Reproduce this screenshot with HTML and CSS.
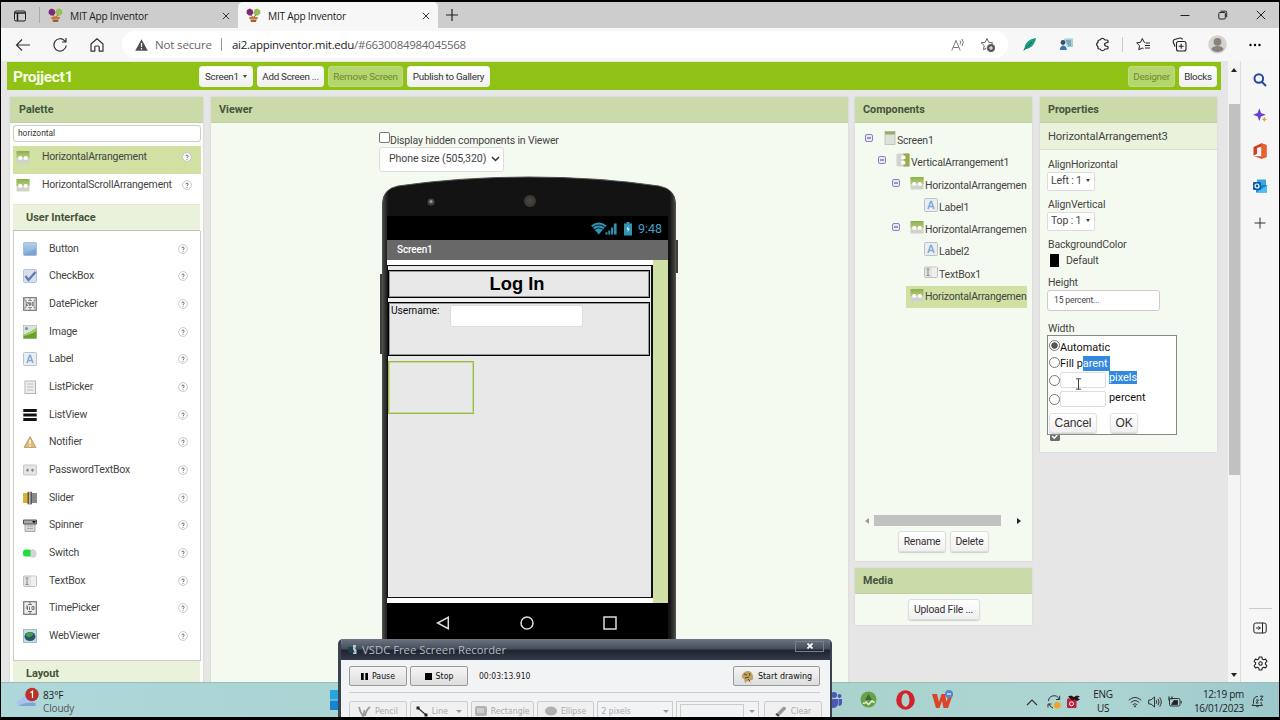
FILE: index.html
```html
<!DOCTYPE html>
<html lang="en">
<head>
    <meta charset="UTF-8">
    <meta name="viewport" content="width=device-width, initial-scale=1.0">
    <title>MIT App Inventor</title>
    <link rel="stylesheet" href="styles.css">
</head>
<body>

<svg class="defs" width="0" height="0">
    <defs>
        <linearGradient id="gBlue" x1="0" y1="0" x2="0" y2="1"><stop offset="0" stop-color="#b4cfec"/><stop offset="1" stop-color="#7da9d6"/></linearGradient>
        <linearGradient id="gGreen" x1="0" y1="0" x2="0" y2="1"><stop offset="0" stop-color="#8cb04c"/><stop offset="1" stop-color="#b3cd78"/></linearGradient>
        <linearGradient id="gPhone" x1="0" y1="0" x2="1" y2="0"><stop offset="0" stop-color="#4a4b49"/><stop offset=".02" stop-color="#131313"/><stop offset=".98" stop-color="#131313"/><stop offset="1" stop-color="#4a4b49"/></linearGradient>
    </defs>
    <symbol id="i-harr" viewBox="0 0 14 14">
        <rect x=".5" y="1" width="13" height="12.500" rx="1" fill="#d0d3ca"/>
        <path d="M.5 1h13v7H.5z" fill="url(#gGreen)"/>
        <rect x="2.300" y="6" width="4" height="3.800" rx="1.500" fill="#fff"/><rect x="7.700" y="6" width="4" height="3.800" rx="1.500" fill="#fff"/>
    </symbol>
    <symbol id="i-varr" viewBox="0 0 14 14">
        <rect x=".5" y=".5" width="13" height="13" rx="1" fill="#cfd3cb"/>
        <path d="M7.500.5h6v13h-6z" fill="#8fb145"/>
        <rect x="5" y="2.500" width="4.500" height="3.800" rx="1.500" fill="#fff"/><rect x="5" y="7.700" width="4.500" height="3.800" rx="1.500" fill="#fff"/>
    </symbol>
    <symbol id="i-screen" viewBox="0 0 14 14">
        <rect x="2" y=".5" width="10" height="13" fill="#dde1da" stroke="#b9bfb3" stroke-width=".8"/>
        <path d="M2 .5h10v3H2z" fill="#97ad6c"/>
    </symbol>
    <symbol id="i-button" viewBox="0 0 14 14">
        <rect x=".5" y=".5" width="13" height="13" rx="1" fill="url(#gBlue)" stroke="#88a9cb" stroke-width=".6"/>
        <path d="M1 13 13 6v7z" fill="#6f9dce" opacity=".5"/>
    </symbol>
    <symbol id="i-checkbox" viewBox="0 0 14 14">
        <rect x=".5" y=".5" width="13" height="13" rx="1" fill="#d8dfec" stroke="#aab6c9" stroke-width=".8"/>
        <path d="m2.500 7 3 4L12.500 3" fill="none" stroke="#5a7bb8" stroke-width="2.300"/>
    </symbol>
    <symbol id="i-date" viewBox="0 0 14 14">
        <rect x=".7" y=".7" width="12.600" height="12.600" fill="#f5f5f5" stroke="#777" stroke-width="1.200"/>
        <path d="M7 1v2M5 3.500h4M7 13v-2M5 10.500h4M1 3h2v8H1M13 3h-2v8h2" stroke="#888" fill="none"/>
        <path d="M3.500 5.500h2v1.500h-2v1.500h2M6.500 5.500v3h1v-3zM9 5.500v3h1v-3z" stroke="#555" stroke-width=".7" fill="none"/>
    </symbol>
    <symbol id="i-image" viewBox="0 0 14 14">
        <rect x=".5" y=".5" width="13" height="13" fill="#d9e3e0" stroke="#a9b5a5" stroke-width=".6"/>
        <path d="M.5 10C5 8 9 6 13.500 3v10.500H.5z" fill="#67a02c"/><path d="M.5 10C5 8 9 6 13.500 3v3C9 9 5 10 .5 11z" fill="#a4cf58"/>
        <circle cx="3.500" cy="3.500" r="1.500" fill="#7d8f94"/>
    </symbol>
    <symbol id="i-label" viewBox="0 0 14 14">
        <rect x=".5" y=".5" width="13" height="13" rx="1" fill="#e9eef3" stroke="#b3bcc7" stroke-width=".9"/>
        <path d="M4 11 6.600 3.500h.8L10 11M5 8.500h4" fill="none" stroke="#86a8d2" stroke-width="1.500"/>
    </symbol>
    <symbol id="i-listpicker" viewBox="0 0 14 14">
        <rect x="2" y="1" width="10.500" height="12.500" fill="#eee" stroke="#b5b5b5"/>
        <path d="M4 4h6.500M4 7h6.500M4 10h6.500" stroke="#bbb" stroke-width="1.200"/>
    </symbol>
    <symbol id="i-listview" viewBox="0 0 14 14"><path d="M.3 2.500h13.400M.3 7h13.400M.3 11.500h13.400" stroke="#111" stroke-width="2.900"/></symbol>
    <symbol id="i-notifier" viewBox="0 0 14 14">
        <path d="M7 1.500 13 12.500H1z" fill="#dfb974" stroke="#b89f76" stroke-width=".9"/><path d="M7 5v4M7 10v1.500" stroke="#fff" stroke-width="1.400"/>
    </symbol>
    <symbol id="i-password" viewBox="0 0 14 14">
        <rect x=".5" y="2" width="13" height="10" rx="1" fill="#e5e5e7" stroke="#bbb" stroke-width=".8"/><path d="M3 7.200h3M8 7.200h3M4.500 5.700v3M9.500 5.700v3" stroke="#85878f" stroke-width="1.200"/>
    </symbol>
    <symbol id="i-slider" viewBox="0 0 14 14">
        <path d="M0 2h5v10H0z" fill="#d9b32d"/><path d="M9 2h5v10H9z" fill="#888c90"/><rect x="4.500" y=".8" width="4.500" height="12.500" fill="#5c564e"/><path d="M6 1h1.500v12H6z" fill="#b8b8b8"/>
    </symbol>
    <symbol id="i-spinner" viewBox="0 0 14 14">
        <path d="M2 5h10v8.500H2z" fill="#d5d8da" stroke="#999" stroke-width=".8"/><path d="M.5 2h13v4H.5z" fill="#a7abb0" stroke="#444" stroke-width=".9"/><path d="M9 3h4l-2 2.500z" fill="#111"/><path d="M4 8h6M4 10.500h6" stroke="#aaa"/>
    </symbol>
    <symbol id="i-switch" viewBox="0 0 14 14"><rect x="5" y="3.500" width="8.500" height="8" rx="4" fill="#ccc"/><rect y="3.500" width="8" height="7" rx="2.500" fill="#24dd3c"/><ellipse cx="10.300" cy="7.500" rx="2.800" ry="4" fill="#d3d3d3"/></symbol>
    <symbol id="i-textbox" viewBox="0 0 14 14">
        <rect x=".5" y="2" width="13" height="10.500" rx="1" fill="#e2e2e2" stroke="#b5b5b5" stroke-width=".8"/><path d="M2.500 4h3M4 4v6.500M2.500 10.500h3" stroke="#8c8c8c" fill="none"/><path d="M8 2.500h5v9.500H8z" fill="#efefef"/>
    </symbol>
    <symbol id="i-time" viewBox="0 0 14 14">
        <rect x=".7" y=".7" width="12.600" height="12.600" fill="#eceff1" stroke="#777" stroke-width="1.200"/>
        <path d="M7 1v3M5 3.500h4M7 13v-3M5 10.500h4M3 5h1.500v4M2.500 7h2M6.500 5.500v3.500M9 5.500v3h2v-3z" stroke="#6c757d" fill="none"/>
    </symbol>
    <symbol id="i-web" viewBox="0 0 14 14">
        <rect x=".5" y=".5" width="13" height="13" fill="#c4dbe9" stroke="#8fb1c6" stroke-width=".8"/><ellipse cx="7" cy="7.500" rx="5.500" ry="4.500" fill="#27566b"/><path d="M3 5c2-2.500 6-2 7-.5S8 8 6 8 2 7 3 5z" fill="#43a047"/>
    </symbol>
    <symbol id="i-help" viewBox="0 0 10 10">
        <circle cx="5" cy="5" r="4.400" fill="#fff" stroke="#bbb" stroke-width=".8"/>
        <path d="M3.800 4.200c0-1.600 2.400-1.600 2.400 0 0 .8-1.200.9-1.200 1.800M5 6.800v.9" fill="none" stroke="#666" stroke-width="1"/>
    </symbol>
    <symbol id="i-minus" viewBox="0 0 8 8"><rect x=".5" y=".5" width="7" height="7" rx="1.500" fill="#eceaf8" stroke="#7877b8" stroke-width=".9"/><path d="M2 4h4" stroke="#454389"/></symbol>
    <symbol id="i-appinv" viewBox="0 0 16 16">
        <path d="M1 2 4 .5 7 2l1 3-2 3H3L.5 5.500z" fill="#7c2a79"/><path d="M9 1.500l3-1 3 2 .5 3-2.500 2.500H9.500L8 5z" fill="#97be55"/>
        <path d="M5 7.500 7.500 10 11 7.500" stroke="#a5632b" fill="none"/><path d="M3.500 9.500h9v2.200h-9z" fill="#c2783c"/><path d="M4.500 12.200h7l-1 2.800h-5z" fill="#a85f2c"/>
    </symbol>
</svg>

<div class="desktop">

    <!-- browser tabs -->
    <div class="tabstrip">
        <svg class="tab-actions" width="14" height="14" viewBox="0 0 14 14" fill="none" stroke="#222"><rect x="1.500" y="2" width="11" height="10" rx="1.500"/><path d="M1.500 4h11M4.500 4v8" stroke-width="1.500"/></svg>
        <div class="tab">
            <svg width="15" height="15"><use href="#i-appinv"/></svg>
            <span>MIT App Inventor</span>
            <svg class="x" width="8" height="8" viewBox="0 0 9 9" stroke="#222"><path d="m1 1 7 7M8 1 1 8"/></svg>
        </div>
        <div class="tab active">
            <svg width="15" height="15"><use href="#i-appinv"/></svg>
            <span>MIT App Inventor</span>
            <svg class="x" width="8" height="8" viewBox="0 0 9 9" stroke="#222"><path d="m1 1 7 7M8 1 1 8"/></svg>
        </div>
        <svg class="newtab" width="12" height="12" viewBox="0 0 12 12" stroke="#222" stroke-width="1.200"><path d="M6 0v12M0 6h12"/></svg>
        <div class="win-buttons">
            <svg width="10" height="10" viewBox="0 0 10 10" stroke="#222"><path d="M.5 5.500h9"/></svg>
            <svg width="10" height="10" viewBox="0 0 10 10" fill="none" stroke="#222"><rect x=".8" y="2.500" width="6.500" height="6.500" rx="1"/><path d="M2.500 1.200h5.200q1 0 1 1v5"/></svg>
            <svg width="10" height="10" viewBox="0 0 10 10" stroke="#222"><path d="m.8.8 8.400 8.400M9.200.8.800 9.200"/></svg>
        </div>
    </div>

    <!-- address bar -->
    <div class="toolbar">
        <svg class="nav-icon" width="16" height="16" viewBox="0 0 16 16" fill="none" stroke="#333" stroke-width="1.200"><path d="M15 8H2M7 2.500 1.500 8 7 13.500"/></svg>
        <svg class="nav-icon" width="16" height="16" viewBox="0 0 16 16" fill="none" stroke="#333" stroke-width="1.200"><path d="M14.200 8.500A6.200 6.200 0 1 1 12.500 3.600L14 5M14 1v4h-4"/></svg>
        <svg class="nav-icon" width="16" height="16" viewBox="0 0 16 16" fill="none" stroke="#333" stroke-width="1.200"><path d="M2 7 8 1.800 14 7v7.200h-3.800V10q0-1-1-1H6.800q-1 0-1 1v4.200H2z" stroke-linejoin="round"/></svg>
        <div class="address">
            <svg width="13" height="12" viewBox="0 0 13 12"><path d="M6.500.3 12.800 11.700H.2z" fill="#505050"/><path d="M6.500 4v4M6.500 9v1.500" stroke="#fff" stroke-width="1.200"/></svg>
            <span class="not-secure">Not secure</span>
            <span class="sep"></span>
            <span class="url">ai2.appinventor.mit.edu<i>/#6630084984045568</i></span>
            <svg class="read" width="14" height="14" viewBox="0 0 14 14" fill="none" stroke="#777"><path d="M.8 12.500 5 2.500l4.200 10M2.300 9.500h5.400M9 2.500q1.500 1.500 0 4M11 1q2.500 3 0 7"/></svg>
            <svg class="fav" width="16" height="16" viewBox="0 0 16 16" fill="none" stroke="#666"><path d="m7 1.500 1.700 3.800 4 .5-2 2.200M7 1.500 5.200 5.300l-4 .5 3 2.800-.7 4.200 3-1.700"/><circle cx="11" cy="11" r="3.700" fill="#555"/><path d="M9 11h4M11 9v4" stroke="#fff"/></svg>
        </div>
        <svg class="ext1" width="15" height="15" viewBox="0 0 15 15"><path d="M14 1C7 2 3 6 2.500 11L1 14l2.500-1.700C10 11 13 7 14 1z" fill="#1c9e85"/><path d="M2 13 10 5" stroke="#0a6556"/></svg>
        <svg class="ext2" width="15" height="15" viewBox="0 0 15 15"><path d="M5 1.500h9V10H8z" fill="#a9cfd6"/><path d="M7 4h5M8 6h4M9 8h3" stroke="#50849a"/><circle cx="4" cy="5.500" r="2.400" fill="#3f4c63"/><path d="M.8 13c0-6 7-6 7 0z" fill="#3978b5"/></svg>
        <svg class="ext3" width="15" height="15" viewBox="0 0 15 15" fill="none" stroke="#222" stroke-width="1.200"><path d="M5 3q2.500-3.500 5 0h2q1 0 1 1v1.500q-3.500.2-3.500 2t3.500 2V11q0 1-1 1h-2q-2.500 3.500-5 0H4q-1 0-1-1V9.700Q.2 7.500 3 5.300V4q0-1 1-1z" stroke-linejoin="round"/></svg>
        <span class="tsep"></span>
        <svg class="ext4" width="15" height="15" viewBox="0 0 15 15" fill="none" stroke="#222"><path d="M9 5.300h-.8L6.300 1.500 4.500 5.300l-3.800.5 2.800 2.900-.7 4L6.300 11l1.200.6M9.500 6H14M9 8.500h5M9 11h5"/></svg>
        <svg class="ext5" width="15" height="15" viewBox="0 0 15 15" fill="none" stroke="#222" stroke-width="1.100"><rect x="4.500" y="4.500" width="9.500" height="9.500" rx="2"/><path d="M9.200 6.800v5M6.700 9.300h5M3 9.500 1.200 5Q.8 3 2.500 2.500L8 1q2-.3 2.500 1.500"/></svg>
        <svg class="avatar" width="19" height="19" viewBox="0 0 19 19"><circle cx="9.500" cy="9.500" r="9.300" fill="#d6d3cf"/><circle cx="9.500" cy="6.800" r="3.900" fill="#86827e"/><ellipse cx="9.500" cy="14" rx="6" ry="2.900" fill="#86827e"/></svg>
        <svg class="dots" width="12" height="4" viewBox="0 0 12 4"><circle cx="1.500" cy="2" r="1.200"/><circle cx="6" cy="2" r="1.200"/><circle cx="10.500" cy="2" r="1.200"/></svg>
    </div>

    <div class="content">
        <div class="page">
            <div class="project-bar">
                <h1>Projject1</h1>
                <button class="btn screen-btn">Screen1 <b class="caret"></b></button>
                <button class="btn add-btn">Add Screen ...</button>
                <button class="btn remove-btn disabled">Remove Screen</button>
                <button class="btn publish-btn">Publish to Gallery</button>
                <button class="btn designer-btn disabled">Designer</button>
                <button class="btn blocks-btn">Blocks</button>
            </div>

            <div class="columns">
                <div class="panel palette">
                    <h2>Palette</h2>
                    <div class="search">horizontal</div>
                    <div class="found selected"><svg width="14" height="14"><use href="#i-harr"/></svg><span>HorizontalArrangement</span><svg class="help"><use href="#i-help"/></svg></div>
                    <div class="found"><svg width="14" height="14"><use href="#i-harr"/></svg><span>HorizontalScrollArrangement</span><svg class="help"><use href="#i-help"/></svg></div>
                    <h3>User Interface</h3>
                    <div class="items">
                        <div class="item"><svg width="14" height="14"><use href="#i-button"/></svg><span>Button</span><svg class="help"><use href="#i-help"/></svg></div>
                        <div class="item"><svg width="14" height="14"><use href="#i-checkbox"/></svg><span>CheckBox</span><svg class="help"><use href="#i-help"/></svg></div>
                        <div class="item"><svg width="14" height="14"><use href="#i-date"/></svg><span>DatePicker</span><svg class="help"><use href="#i-help"/></svg></div>
                        <div class="item"><svg width="14" height="14"><use href="#i-image"/></svg><span>Image</span><svg class="help"><use href="#i-help"/></svg></div>
                        <div class="item"><svg width="14" height="14"><use href="#i-label"/></svg><span>Label</span><svg class="help"><use href="#i-help"/></svg></div>
                        <div class="item"><svg width="14" height="14"><use href="#i-listpicker"/></svg><span>ListPicker</span><svg class="help"><use href="#i-help"/></svg></div>
                        <div class="item"><svg width="14" height="14"><use href="#i-listview"/></svg><span>ListView</span><svg class="help"><use href="#i-help"/></svg></div>
                        <div class="item"><svg width="14" height="14"><use href="#i-notifier"/></svg><span>Notifier</span><svg class="help"><use href="#i-help"/></svg></div>
                        <div class="item"><svg width="14" height="14"><use href="#i-password"/></svg><span>PasswordTextBox</span><svg class="help"><use href="#i-help"/></svg></div>
                        <div class="item"><svg width="14" height="14"><use href="#i-slider"/></svg><span>Slider</span><svg class="help"><use href="#i-help"/></svg></div>
                        <div class="item"><svg width="14" height="14"><use href="#i-spinner"/></svg><span>Spinner</span><svg class="help"><use href="#i-help"/></svg></div>
                        <div class="item"><svg width="14" height="14"><use href="#i-switch"/></svg><span>Switch</span><svg class="help"><use href="#i-help"/></svg></div>
                        <div class="item"><svg width="14" height="14"><use href="#i-textbox"/></svg><span>TextBox</span><svg class="help"><use href="#i-help"/></svg></div>
                        <div class="item"><svg width="14" height="14"><use href="#i-time"/></svg><span>TimePicker</span><svg class="help"><use href="#i-help"/></svg></div>
                        <div class="item"><svg width="14" height="14"><use href="#i-web"/></svg><span>WebViewer</span><svg class="help"><use href="#i-help"/></svg></div>
                    </div>
                    <h3 class="layout">Layout</h3>
                </div>

                <div class="panel viewer">
                    <h2>Viewer</h2>
                    <div class="viewer-body">
                        <div class="hidden-check"><span class="box"></span>Display hidden components in Viewer</div>
                        <div class="size-select">Phone size (505,320)<svg width="9" height="6" viewBox="0 0 9 6" fill="none" stroke="#333" stroke-width="1.500"><path d="m1 1 3.500 3.500L8 1"/></svg></div>
                        <div class="phone">
                            <svg class="shell" width="298" height="470" viewBox="0 0 298 470">
                                <path d="M0 98h4v80H0zM295 64h3v33h-3z" fill="#3c3f3c"/>
                                <path d="M2.500 470V27Q3 13 18 10 80 1 149 1t130 9q16 3 16.500 17v443z" fill="url(#gPhone)" stroke="#50524f"/>
                                <circle cx="51" cy="26" r="3.500" fill="#444"/><circle cx="51" cy="25.500" r="1.500" fill="#999"/>
                                <circle cx="150" cy="25" r="6" fill="#3d3a37"/><circle cx="150" cy="25" r="3" fill="#48443f"/>
                            </svg>
                            <div class="phone-screen">
                                <div class="status">
                                    <svg width="42" height="15" viewBox="0 0 42 15" fill="#3292b4"><path d="M0 4.500Q7.800-1.500 15.600 4.500L7.800 13.500z"/><path d="M1.500 6.300q6.300-4.600 12.600 0M3.300 8.400q4.500-3 9 0" stroke="#000" stroke-width=".8" fill="none"/><path d="M14.500 13.500v-2.200h2v2.200zM17.300 13.500V9.500h2v4zM20.100 13.500V6.500h2v7zM22.900 13.500V2.500h2.700v11zM33 2.500h2.500V1h3v1.500H41v12h-8z"/><path d="m37.500 4.500-2 4h1.500l-.5 3 2.200-4H37z" fill="#fff"/></svg>
                                    <span>9:48</span>
                                </div>
                                <div class="title-bar">Screen1</div>
                                <div class="canvas">
                                    <div class="va">
                                        <div class="ha login">Log In</div>
                                        <div class="ha user"><span>Username:</span><span class="field"></span></div>
                                        <div class="ha picked"></div>
                                    </div>
                                </div>
                                <div class="nav">
                                    <svg width="14" height="14" viewBox="0 0 14 14" fill="none" stroke="#ddd" stroke-width="1.500"><path d="M12.300 1.300v11.400L1.500 7z"/></svg>
                                    <svg width="14" height="14" viewBox="0 0 14 14" fill="none" stroke="#ddd" stroke-width="1.500"><circle cx="7" cy="7" r="6"/></svg>
                                    <svg width="14" height="14" viewBox="0 0 14 14" fill="none" stroke="#ddd" stroke-width="1.500"><rect x="1" y="1" width="12" height="12"/></svg>
                                </div>
                            </div>
                        </div>
                    </div>
                </div>

                <div class="stack">
                    <div class="panel components">
                        <h2>Components</h2>
                        <div class="tree">
                            <div class="node"><svg class="fold"><use href="#i-minus"/></svg><svg class="ic"><use href="#i-screen"/></svg><span>Screen1</span></div>
                            <div class="node lv1"><svg class="fold"><use href="#i-minus"/></svg><svg class="ic"><use href="#i-varr"/></svg><span>VerticalArrangement1</span></div>
                            <div class="node lv2"><svg class="fold"><use href="#i-minus"/></svg><svg class="ic"><use href="#i-harr"/></svg><span>HorizontalArrangemen</span></div>
                            <div class="node lv3"><svg class="ic"><use href="#i-label"/></svg><span>Label1</span></div>
                            <div class="node lv2"><svg class="fold"><use href="#i-minus"/></svg><svg class="ic"><use href="#i-harr"/></svg><span>HorizontalArrangemen</span></div>
                            <div class="node lv3"><svg class="ic"><use href="#i-label"/></svg><span>Label2</span></div>
                            <div class="node lv3"><svg class="ic"><use href="#i-textbox"/></svg><span>TextBox1</span></div>
                            <div class="node current"><svg class="ic"><use href="#i-harr"/></svg><span>HorizontalArrangemen</span></div>
                        </div>
                        <div class="hscroll">
                            <svg width="4" height="6" viewBox="0 0 4 6"><path d="M4 0v6L0 3z" fill="#999"/></svg>
                            <span class="bar"></span>
                            <svg width="4" height="6" viewBox="0 0 4 6"><path d="M0 0v6l4-3z" fill="#222"/></svg>
                        </div>
                        <div class="actions">
                            <button class="btn rename-btn">Rename</button>
                            <button class="btn delete-btn">Delete</button>
                        </div>
                    </div>
                    <div class="panel media">
                        <h2>Media</h2>
                        <button class="btn upload-btn">Upload File ...</button>
                    </div>
                </div>

                <div class="panel properties">
                    <h2>Properties</h2>
                    <div class="comp-name">HorizontalArrangement3</div>
                    <div class="props">
                        <label>AlignHorizontal</label>
                        <div class="drop">Left : 1 <b class="caret"></b></div>
                        <label>AlignVertical</label>
                        <div class="drop">Top : 1 <b class="caret"></b></div>
                        <label>BackgroundColor</label>
                        <div class="color"><span class="swatch"></span>Default</div>
                        <label>Height</label>
                        <div class="length">15 percent...</div>
                        <label class="width-label">Width</label>
                        <svg class="visible" width="10" height="10" viewBox="0 0 10 10"><rect width="10" height="10" rx="1.500" fill="#6b6b6b"/><path d="m2 5 2.300 2.300L8 3" fill="none" stroke="#fff" stroke-width="1.400"/></svg>
                    </div>
                    <div class="popup">
                        <div class="opt"><span class="radio on"></span>Automatic</div>
                        <div class="opt"><span class="radio"></span>Fill p<mark class="wide">arent</mark></div>
                        <div class="opt num"><span class="radio"></span><span class="entry"></span><mark>pixels</mark></div>
                        <div class="opt num last"><span class="radio"></span><span class="entry"></span><em>percent</em></div>
                        <div class="popup-actions"><button class="btn cancel-btn">Cancel</button><button class="btn ok-btn">OK</button></div>
                        <svg class="ibeam" width="7" height="12" viewBox="0 0 7 12" fill="none" stroke="#444"><path d="M1 .8h5M1 11.200h5M3.500 1v10"/></svg>
                    </div>
                </div>
            </div>
        </div>

        <div class="vscroll">
            <svg width="6" height="4" viewBox="0 0 6 4"><path d="M0 4h6L3 0z" fill="#222"/></svg>
            <span class="thumb"></span>
            <svg class="down" width="6" height="4" viewBox="0 0 6 4"><path d="M0 0h6L3 4z" fill="#222"/></svg>
        </div>

        <div class="sidebar">
            <svg width="14" height="14" viewBox="0 0 14 14" fill="none" stroke="#24489a" stroke-width="2"><circle cx="5.800" cy="5.500" r="4.300"/><path d="m9 9 4 4"/></svg>
            <svg width="14" height="14" viewBox="0 0 14 14"><path d="M6.300.3 8 5l4.800 1.700L8 8.400 6.300 13 4.600 8.400 0 6.700 4.600 5z" fill="#6444d0"/><path d="m11.300 8.800.9 1.800 1.800.8-1.800.8-.9 1.800-.8-1.800-1.700-.8 1.700-.8z" fill="#e0a63a"/></svg>
            <svg width="14" height="16" viewBox="0 0 14 16"><path d="M.5 4 8.500.3 13.500 2v12l-5 1.700L1 13l7.500.5v-10L4 5v6L.5 12.500z" fill="#d43d1e"/><path d="M8.500.3 13.500 2v12l-5 1.700z" fill="#e8622f"/></svg>
            <svg width="14" height="14" viewBox="0 0 14 14"><path d="M4 .5h9v6H4z" fill="#3ba7e0"/><path d="M3 6h11v7.500H3z" fill="#1c83c9"/><path d="m3 13.500 11-7v7z" fill="#4bc0ee"/><rect y="3" width="8" height="8" rx="1" fill="#0c5fae"/><circle cx="4" cy="7" r="2" fill="none" stroke="#fff" stroke-width="1.200"/></svg>
            <svg class="plus" width="12" height="12" viewBox="0 0 12 12" stroke="#333"><path d="M6 .5v11M.5 6h11"/></svg>
            <hr>
            <svg class="collapse" width="14" height="12" viewBox="0 0 14 12" fill="none" stroke="#222"><rect x=".8" y="1" width="12.400" height="10" rx="2"/><path d="M9.500 1v10M3 6h4.300M5.500 4.200 7.300 6 5.500 7.800"/></svg>
            <svg class="gear" width="15" height="15" viewBox="0 0 15 15" fill="none" stroke="#222" stroke-width="1.100"><path d="M6.200 1h2.600l.5 2 1.300.7 2-.6 1.300 2.300-1.500 1.400v1.400l1.500 1.400-1.300 2.300-2-.6-1.300.7-.5 2H6.200l-.5-2-1.300-.7-2 .6L1.100 9.600l1.500-1.400V6.800L1.100 5.400l1.300-2.300 2 .6L5.700 3z" stroke-linejoin="round"/><circle cx="7.500" cy="7.500" r="1.700"/></svg>
        </div>
    </div>

    <!-- windows taskbar -->
    <div class="taskbar">
        <svg class="weather" width="25" height="24" viewBox="0 0 25 24"><path d="M3 19q-3-1-2-4t4-2q2-6 8-4 4 2 4 5 4 1 2.500 5z" fill="#a6c4ec"/><path d="M3 19q5-4 16.500-3v3z" fill="#7fa5d8"/><circle cx="16" cy="7.500" r="6.700" fill="#b9322a"/><path d="m14.500 5.700 2-1.500V11" fill="none" stroke="#fff" stroke-width="1.200"/></svg>
        <div class="temp">83°F<br><span>Cloudy</span></div>
        <svg class="start" width="20" height="20" viewBox="0 0 20 20"><path d="M0 0h9.500v9.500H0zM10.500 0H20v9.500h-9.500z" fill="#28a5dd"/><path d="M0 10.500h9.500V20H0zM10.500 10.500H20V20h-9.500z" fill="#1585cf"/></svg>
        <svg class="teams" width="18" height="18" viewBox="0 0 18 18" fill="#4b58b4"><circle cx="10" cy="4" r="3"/><path d="M4 8h10v5q-1 4-5 4t-5-4z"/><circle cx="15.500" cy="5" r="2"/><path d="M14.500 8H18v5q-1 2-3.500 2z"/></svg>
        <svg class="studio" width="17" height="18" viewBox="0 0 17 18"><circle cx="8.500" cy="8.500" r="8" fill="#6ba04a"/><path d="M8.500 3 5 9h7zM8.500 3v4" fill="#3b6b37"/><path d="M3 12q2 1 3-1l2.500 2.500L12 10l2.500 1.500" stroke="#e9f0d9" stroke-width="1.500" fill="none"/></svg>
        <svg class="opera" width="19" height="20" viewBox="0 0 19 20"><ellipse cx="9.500" cy="10" rx="9.300" ry="9.700" fill="#d3212d"/><ellipse cx="9.500" cy="10" rx="4" ry="6.800" fill="#add3cf"/></svg>
        <svg class="wps" width="21" height="20" viewBox="0 0 21 20"><path d="M0 4h5l2 8 2.500-8H13l1.500 8L17 4h4l-5 14h-4.500L10 11l-2.500 7H4z" fill="#dc4328"/><circle cx="17" cy="4" r="4" fill="#5585ce"/><path d="M15 4h4" stroke="#dce6f5" stroke-width="1.500"/></svg>
        <div class="tray">
            <svg width="12" height="8" viewBox="0 0 12 8" fill="none" stroke="#333" stroke-width="1.200"><path d="m1 7 5-5 5 5"/></svg>
            <svg class="sync" width="14" height="14" viewBox="0 0 14 14" fill="none" stroke="#333"><path d="M1.500 6A5.500 5.500 0 0 1 12 4M12.700.8V4.500H9M2 9q1 3 4 4M1 12.500V9h3.500"/><circle cx="10.300" cy="10.300" r="3.300" fill="#f0a424" stroke="none"/></svg>
            <svg class="drop-ic" width="13" height="13" viewBox="0 0 13 13"><rect y="3.500" width="9.500" height="9.500" rx="1" fill="#c01f3c"/><circle cx="4.500" cy="8.800" r="2" fill="none" stroke="#fff"/><path d="m1 1.500 3-1 3 1.500 3-1.500 3 1L10.500 3l2.500 1.500-3 1.500-2.500-1.500L5 5.500z" fill="#2b0d13"/></svg>
            <div class="lang">ENG<br>US</div>
            <svg class="wifi" width="14" height="12" viewBox="0 0 14 12" fill="none" stroke="#333"><path d="M.8 4.200q6.200-5.500 12.400 0M2.800 6.500q4.200-3.800 8.400 0M4.700 8.700q2.300-2 4.600 0"/><circle cx="7" cy="10.300" r=".7"/></svg>
            <svg class="sound" width="14" height="12" viewBox="0 0 14 12" fill="none" stroke="#333"><path d="M.7 4h2.200L6.500 1v10L2.900 8H.7zM8.200 4.200q1.200 1.800 0 3.600M10 2.700q2.200 3.300 0 6.600M11.700 1.300q3.200 4.700 0 9.400"/></svg>
            <svg class="battery" width="14" height="12" viewBox="0 0 14 12" fill="none" stroke="#333"><rect x="1.500" y="2.500" width="10.500" height="7.500" rx="1.500"/><path d="M13.300 5v2.500"/><path d="M6 4.500h3.500v4H3.500z" fill="#222"/><path d="M1 .5v4M4 .5v3" stroke-width="1.300"/></svg>
            <div class="clock">12:19 pm<br>16/01/2023</div>
            <svg class="bell" width="13" height="13" viewBox="0 0 13 13" fill="none" stroke="#333"><path d="M7 1.500Q2.500 1.500 2.500 6v2.500L1.200 10.500h10.300L10.200 8.500V7M4.800 10.700q1.500 2.300 3.500 0M5 5h2.500L5 8h2.500M9 1.200h3L9.300 5H12"/></svg>
        </div>
    </div>

    <!-- floating recorder window -->
    <div class="recorder">
        <div class="rec-title">
            <svg width="10" height="11" viewBox="0 0 10 11"><path d="M0 3h5v6H1z" fill="#17464c"/><path d="M5 1h3v2.500H6.500L8.500 6v4H5V8.500h1.500L5 5z" fill="#b8cad0"/></svg>
            <span>VSDC Free Screen Recorder</span>
            <div class="close"><svg width="6" height="6" viewBox="0 0 6 6" stroke="#fff" stroke-width="1.700"><path d="m.5.5 5 5M5.500.5l-5 5"/></svg></div>
        </div>
        <div class="rec-row">
            <button class="rbtn"><svg width="7" height="7" viewBox="0 0 7 7"><path d="M0 0h2.700v7H0zM4.300 0H7v7H4.300z"/></svg>Pause</button>
            <button class="rbtn"><svg width="7" height="7" viewBox="0 0 7 7"><path d="M0 0h7v7H0z"/></svg>Stop</button>
            <span class="elapsed">00:03:13.910</span>
            <button class="rbtn draw"><svg width="13" height="13" viewBox="0 0 13 13"><path d="M1 5q2-4 6-4t5 5-3 4l1 3-3-2-3 2-1-4q-3-1-2-4z" fill="#bfa365"/><path d="M3 4l3 1M8 3l1 3M4 8l4-1M7 9l2 2" stroke="#5e4b27"/></svg>Start drawing</button>
        </div>
        <div class="rec-row tools">
            <button class="rbtn off"><svg width="13" height="11" viewBox="0 0 13 11"><path d="M1 1q1 5 4 9 2-4 1-6M12 1Q8 4 7 10" fill="none" stroke="#999" stroke-width="1.800"/></svg>Pencil</button>
            <button class="rbtn off split"><svg width="12" height="11" viewBox="0 0 12 11"><path d="m2 2 8 7" stroke="#333" stroke-width="1.300"/><path d="M.5.500h3v3h-3zM8.500 7.500h3v3h-3z" fill="#222"/></svg>Line<i></i></button>
            <button class="rbtn off rect"><svg width="12" height="10" viewBox="0 0 12 10"><rect width="12" height="10" rx="2" fill="#b3b3b3"/><rect x="2" y="2" width="7" height="5" fill="#ccc"/></svg>Rectangle</button>
            <button class="rbtn off"><svg width="12" height="10" viewBox="0 0 12 10"><ellipse cx="6" cy="5" rx="6" ry="4.500" fill="#b0b0b0"/></svg>Ellipse</button>
            <div class="combo">2 pixels<i></i></div>
            <div class="combo second"><span></span><i></i></div>
            <button class="rbtn off clear"><svg width="12" height="11" viewBox="0 0 12 11"><path d="m1 8 7-7q3-1 3 2L4 10z" fill="#999"/><path d="m1 8 3 2" stroke="#444" stroke-width="2"/></svg>Clear</button>
        </div>
    </div>
</div>

</body>
</html>
```
FILE: styles.css
```css
* {
    box-sizing: border-box;
}
body {
    margin: 0;
    background-color: #000;
    font-family: Roboto, "Liberation Sans", sans-serif;
    font-size: 11px;
    color: #444;
    overflow: hidden;
}
svg {
    display: block;
    flex: none;
}
.defs {
    position: absolute;
}
.desktop {
    position: relative;
    width: 1280px;
    height: 720px;
    padding: 2px 1px 3px;
    background-color: #000;
    display: flex;
    flex-direction: column;
    overflow: hidden;
}
h1, h2, h3 {
    margin: 0;
}
button {
    font-family: inherit;
    padding: 0;
    white-space: nowrap;
}

/* browser */
.tabstrip {
    height: 26px;
    flex: none;
    background-color: #cdcdcd;
    display: flex;
    align-items: center;
    font-family: "Open Sans", "Noto Sans", sans-serif;
    color: #222;
}
.tab-actions {
    margin: 2px 17px 0 12px;
}
.tab {
    width: 198px;
    height: 26px;
    display: flex;
    align-items: center;
    padding-left: 4px;
    font-size: 10.2px;
    letter-spacing: -.25px;
}
.tab:not(.active) {
    width: 198px;
    height: 16px;
    border-left: 1px solid #aaa;
    margin-left: -5px;
}
.tab.active {
    width: 200px;
    padding: 1px 0 0 8px;
    background-color: #f7f7f7;
    border-radius: 5px 5px 0 0;
    margin-left: 1px;
}
.tab span {
    margin-left: 7px;
    padding-top: 1px;
}
.tab:not(.active) svg:first-child {
    margin-left: 4px;
}
.tab .x {
    margin: 1px 8px 0 auto;
}
.tab:not(.active) .x {
    margin-right: 7px;
}
.newtab {
    margin-left: 8px;
}
.win-buttons {
    margin-left: auto;
    margin-right: 13px;
    display: flex;
    gap: 28px;
}
.toolbar {
    height: 33px;
    flex: none;
    background-color: #f7f7f7;
    display: flex;
    align-items: center;
    padding-left: 14px;
}
.nav-icon {
    margin-right: 21px;
}
.address {
    width: 886px;
    height: 27px;
    margin-left: -4px;
    border-radius: 13px;
    background-color: #fff;
    display: flex;
    align-items: center;
    padding-left: 13px;
    font-family: "Open Sans", "Noto Sans", sans-serif;
    font-size: 11.5px;
    letter-spacing: -.15px;
    color: #666;
}
.not-secure {
    margin-left: 7px;
    width: 66px;
}
.sep {
    width: 1px;
    height: 13px;
    background-color: #999;
    margin-right: 10px;
}
.url {
    color: #222;
    letter-spacing: -.28px;
}
.url i {
    font-style: normal;
    color: #666;
}
.read {
    margin-left: auto;
    margin-right: 15px;
}
.fav {
    margin-right: 12px;
}
.ext1 {
    margin-left: 14px;
}
.ext2, .ext3 {
    margin-left: 22px;
}
.ext3 {
    margin-left: 21px;
}
.tsep {
    width: 1px;
    height: 15px;
    background-color: #ccc;
    margin: 0 13px 0 12px;
}
.ext5 {
    margin-left: 21px;
}
.avatar {
    margin-left: 21px;
}
.dots {
    margin-left: 22px;
}
.content {
    height: 621px;
    flex: none;
    display: flex;
}
.vscroll {
    width: 13px;
    background-color: #f4f4f4;
    border-right: 1px solid #ddd;
    display: flex;
    flex-direction: column;
    align-items: center;
    padding-top: 7px;
}
.vscroll .thumb {
    width: 11px;
    height: 371px;
    margin-top: 32px;
    background-color: #c1c1c1;
}
.vscroll .down {
    margin-top: auto;
    margin-bottom: 5px;
}
.sidebar {
    flex: 1;
    background-color: #f6f6f6;
    display: flex;
    flex-direction: column;
    align-items: center;
    padding-top: 12px;
    gap: 21px;
}
.sidebar svg:nth-child(4) {
    margin-top: -1px;
}
.sidebar .plus {
    margin-top: 3px;
}
.sidebar hr {
    width: 23px;
    margin: 358px 0 -8px;
    border: 0;
    border-top: 1px solid #ccc;
}
.sidebar .gear {
    margin-top: 1px;
}

/* designer page */
.page {
    width: 1227px;
    background-color: #e6e6e7;
    padding: 1px 0 0 6px;
    overflow: hidden;
}
.project-bar {
    width: 1214px;
    height: 28px;
    background-color: #8fc214;
    display: flex;
    align-items: center;
    padding: 0 4px 0 6px;
}
.project-bar h1 {
    font-size: 15.5px;
    color: #f6fbe6;
    width: 186px;
    font-weight: 700;
    letter-spacing: -.3px;
    padding-top: 2px;
}
.btn {
    height: 21px;
    border: 1px solid #ddd;
    border-radius: 3px;
    background: linear-gradient(#fff, #f0f0f0);
    color: #333;
    font-size: 10px;
    text-align: center;
}
.project-bar .btn {
    border-color: #f2f5e8;
    margin-right: 4px;
    font-size: 9.8px;
    letter-spacing: -.25px;
}
.project-bar .btn.disabled {
    background: #b5d66c;
    border-color: #bfdc80;
    color: #6b8a35;
}
.caret {
    display: inline-block;
    vertical-align: middle;
    border: 2px solid transparent;
    border-top: 3px solid #444;
    border-bottom: 0;
    margin: 0 0 1px 2px;
}
.screen-btn { width: 54px; }
.add-btn { width: 67px; }
.remove-btn { width: 75px; }
.publish-btn { width: 83px; }
.designer-btn { width: 47px; margin-left: auto; }
.project-bar .blocks-btn { width: 38px; margin-right: 0; }

.columns {
    display: flex;
    align-items: flex-start;
    padding: 7px 0 0 3px;
    height: 592px;
}
.panel {
    background-color: #f5faf0;
    box-shadow: 0 0 2px #ccc;
}
.panel h2 {
    height: 26px;
    line-height: 25px;
    padding-left: 8px;
    background-color: #cadaa9;
    border-bottom: 1px solid #c0cfa5;
    font-size: 10.8px;
    letter-spacing: 0;
    font-weight: 700;
    color: #45543a;
}
.palette {
    width: 193px;
    height: 592px;
    margin-right: 8px;
    background-color: #fbfdf6;
}
.palette h2 {
    padding-left: 9px;
}
.search {
    width: 188px;
    height: 17px;
    margin: 2px 0 4px 3px;
    border: 1px solid #ccc;
    border-radius: 3px;
    background-color: #fff;
    font-size: 8.4px;
    line-height: 14px;
    padding-left: 4px;
    color: #333;
}
.found {
    width: 188px;
    height: 28px;
    margin-left: 3px;
    display: flex;
    align-items: center;
    padding: 0 9px 6px 3px;
    background-color: #fff;
    font-size: 10.5px;
    letter-spacing: -.2px;
}
.found.selected {
    background-color: #d1e1a3;
}
.found span {
    margin-left: 12px;
    padding-bottom: 1px;
}
.help {
    width: 10px;
    height: 10px;
    margin-left: auto;
}
.palette h3 {
    height: 27px;
    line-height: 26px;
    margin: 2px 3px 0;
    padding-left: 13px;
    background-color: #ebf2dc;
    font-size: 11px;
    letter-spacing: -.05px;
    color: #45543a;
    border-top: 1px solid #e3e9d6;
    border-bottom: 1px solid #bfc6b5;
}
.items {
    width: 188px;
    height: 430px;
    margin-left: 3px;
    padding-top: 4px;
    background-color: #fff;
    border: 1px solid #ccc;
    border-top: 0;
}
.item {
    height: 27.65px;
    display: flex;
    align-items: center;
    padding: 0 12px 0 9px;
    font-size: 10.5px;
    letter-spacing: -.2px;
}
.item span {
    margin-left: 12px;
    padding-bottom: 1px;
}
.palette .layout {
    margin-top: 0;
    border: 0;
}

.viewer {
    width: 637px;
    height: 592px;
    margin-right: 7px;
}
.viewer-body {
    padding: 9px 0 0 168px;
    height: 566px;
    overflow: hidden;
}
.hidden-check {
    display: flex;
    height: 15px;
    align-items: flex-end;
    font-size: 10.5px;
    letter-spacing: -.17px;
    line-height: 13px;
}
.hidden-check .box {
    width: 11px;
    height: 11px;
    border: 1px solid #777;
    border-radius: 2px;
    background-color: #fff;
    margin-bottom: 4px;
}
.size-select {
    width: 125px;
    height: 25px;
    border: 1px solid #ddd;
    border-radius: 3px;
    background-color: #fff;
    display: flex;
    align-items: center;
    padding: 0 3px 2px 9px;
    font-size: 10.6px;
    letter-spacing: -.1px;
    white-space: nowrap;
}
.size-select svg {
    margin-left: auto;
}
.phone {
    position: relative;
    width: 298px;
    height: 470px;
    margin: 4px 0 0 1px;
    padding: 40px 0 0 7px;
}
.shell {
    position: absolute;
    left: 0;
    top: 0;
}
.phone-screen {
    position: relative;
    width: 281px;
    background-color: #000;
}
.status {
    height: 24px;
    display: flex;
    align-items: center;
    justify-content: flex-end;
    padding-right: 6px;
    color: #41a3c4;
    font-size: 12.5px;
}
.status span {
    margin-left: 5px;
}
.title-bar {
    height: 20px;
    line-height: 19px;
    padding-left: 10px;
    background-color: #686868;
    color: #fff;
    font-size: 10px;
    letter-spacing: -.15px;
    font-weight: 500;
}
.canvas {
    height: 343px;
    padding-top: 5px;
    background: linear-gradient(90deg, #fff 266px, #cfdfa5 266px);
}
.va {
    width: 266px;
    height: 333px;
    background-color: #e8e8e8;
    border: 1px solid #111;
    border-right-width: 2px;
    padding: 4px 1px 0 0;
}
.ha {
    border: 1px solid #000;
    outline: 1px solid rgba(0, 0, 0, .35);
    outline-offset: -2px;
}
.login {
    height: 28px;
    text-align: center;
    font: bold 18.3px/25px "Liberation Sans", sans-serif;
    color: #000;
    padding-right: 4px;
    box-shadow: 0 4px 0 #f0f0f0;
}
.user {
    height: 54px;
    margin-top: 4px;
    display: flex;
    padding: 2px 0 0 2px;
    font-size: 10.3px;
    letter-spacing: -.1px;
    line-height: 12px;
    color: #111;
}
.user .field {
    width: 133px;
    height: 22px;
    margin-left: 11px;
    background-color: #fff;
    border: 1px solid #ddd;
    border-radius: 3px;
}
.picked {
    width: 86px;
    height: 53px;
    margin-top: 5px;
    border: 1px solid #98bd3c;
    outline-color: rgba(152, 189, 60, .4);
}
.nav {
    height: 60px;
    padding: 13px 51px 0 49px;
    display: flex;
    justify-content: space-between;
}

.stack {
    width: 177px;
    margin-right: 8px;
}
.components {
    height: 464px;
    display: flex;
    flex-direction: column;
}
.tree {
    width: 172px;
    padding: 7px 0 0 10px;
    overflow: hidden;
    flex: 1;
}
.node {
    height: 22.3px;
    display: flex;
    align-items: flex-start;
    font-size: 10.5px;
    letter-spacing: -.2px;
    white-space: nowrap;
}
.node .fold {
    width: 8px;
    height: 8px;
    margin-top: 4px;
}
.node .ic {
    width: 14px;
    height: 14px;
    margin: 1px 1px 0 10px;
}
.node:first-child span {
    margin-left: -1px;
}
.node span {
    margin-top: 4px;
    line-height: 13px;
}
.lv1 { padding-left: 13px; }
.lv2 { padding-left: 27px; }
.lv3 { padding-left: 47px; }
.node.lv3 .ic {
    margin-left: 12px;
}
.node.current {
    margin-left: 41px;
    background-color: #d1e1a3;
}
.node.current .ic {
    margin: 2px 1px 0 4px;
}
.hscroll {
    height: 13px;
    display: flex;
    align-items: center;
    padding: 0 11px 0 10px;
    margin-bottom: 4px;
}
.hscroll .bar {
    width: 127px;
    height: 11px;
    background-color: #c1c1c1;
    margin: 0 auto 0 5px;
}
.actions {
    display: flex;
    justify-content: center;
    gap: 4px;
    margin-bottom: 9px;
}
.rename-btn { width: 48px; }
.delete-btn { width: 39px; }
.components .btn, .media .btn {
    box-shadow: 0 1px 1px #ccc;
    font-size: 10.4px;
    letter-spacing: -.2px;
}
.media {
    margin-top: 7px;
    height: 57px;
}
.media .btn {
    display: block;
    width: 72px;
    margin: 5px auto 0;
}
.properties {
    position: relative;
    width: 177px;
    height: 355px;
}
.comp-name {
    height: 27px;
    line-height: 27px;
    padding-left: 8px;
    background-color: #ebf2dc;
    border-bottom: 1px solid #d8e0c8;
    font-size: 11.2px;
    letter-spacing: -.12px;
}
.props {
    padding: 8px 0 0 8px;
    font-size: 10.5px;
    letter-spacing: -.15px;
}
.props label {
    display: block;
    height: 14px;
    line-height: 14px;
}
.drop {
    width: 48px;
    height: 19px;
    line-height: 16px;
    margin: 0 0 7px -1px;
    padding-left: 3px;
    background-color: #fff;
    border: 1px solid #ddd;
    border-radius: 2px;
    white-space: nowrap;
}
.color {
    display: flex;
    align-items: center;
    height: 16px;
    margin-bottom: 8px;
}
.swatch {
    width: 9px;
    height: 13px;
    background-color: #000;
    margin: 0 7px 0 2px;
}
.length {
    width: 113px;
    height: 21px;
    line-height: 18px;
    margin: 0 0 10px -1px;
    padding-left: 6px;
    background-color: #fff;
    border: 1px solid #ccc;
    border-radius: 3px;
    font-size: 8.6px;
}
.width-label {
    padding-top: 1px;
}
.visible {
    margin: 96px 0 0 2px;
}
.popup {
    position: absolute;
    left: 7px;
    top: 238px;
    width: 130px;
    height: 100px;
    border: 1px solid #888;
    background-color: #fff;
    padding: 3px 1px;
    color: #111;
}
.opt {
    display: flex;
    height: 16.5px;
    align-items: center;
    font-size: 10.9px;
}
.opt mark {
    background-color: #3389e0;
    color: #fff;
    line-height: 13px;
}
.opt mark.wide {
    padding-right: 2px;
    line-height: 15px;
}
.radio {
    width: 11px;
    height: 11px;
    border: 1px solid #777;
    border-radius: 50%;
    background-color: #fff;
    margin-bottom: 3px;
}
.radio.on {
    background: radial-gradient(#555 45%, #fff 55%);
}
.opt.num {
    height: 19px;
    align-items: flex-start;
}
.num mark {
    margin-top: -1px;
}
.num .radio {
    margin-top: 3px;
}
.entry {
    width: 46px;
    height: 16px;
    border: 1px solid #ddd;
    border-radius: 2px;
    margin-right: 3px;
}
.num em {
    font-style: normal;
    line-height: 13px;
}
.popup-actions {
    display: flex;
    gap: 13px;
    margin-top: 3px;
}
.popup .btn {
    font: 12px "Liberation Sans", sans-serif;
    letter-spacing: -.1px;
    border-color: #e2e2e2;
    box-shadow: 0 1px 1px #ccc;
    height: 20px;
}
.cancel-btn { width: 48px; }
.ok-btn { width: 28px; }
.ibeam {
    position: absolute;
    left: 27px;
    top: 42px;
}

/* taskbar */
.taskbar {
    flex: 1;
    display: flex;
    align-items: center;
    background: linear-gradient(90deg, #aed8da, #a7d0cb 50%, #add6d2 85%, #9cc8cc);
    border-top: 1px solid #9bbcb4;
    font-family: "Open Sans", "Noto Sans", sans-serif;
    font-size: 10px;
    line-height: 13.5px;
    letter-spacing: -.3px;
    color: #222;
}
.weather {
    margin-left: 15px;
    margin-bottom: 2px;
}
.temp {
    margin-left: 2px;
    padding-top: 4px;
    width: 60px;
    letter-spacing: -.15px;
}
.temp span {
    color: #555;
}
.start {
    margin-left: 227px;
}
.teams { margin-left: 474px; }
.studio { margin-left: 18px; }
.opera { margin-left: 19px; }
.wps { margin-left: 17px; }
.tray {
    margin-left: auto;
    display: flex;
    align-items: center;
    padding: 3px 15px 0 0;
}
.sync { margin-left: 9px; }
.drop-ic { margin-left: 6px; }
.lang {
    width: 24px;
    margin-left: 11px;
    text-align: center;
}
.wifi { margin-left: 13px; }
.sound { margin-left: 6px; }
.battery { margin-left: 6px; }
.clock {
    width: 54px;
    margin: 0 7px 0 8px;
    text-align: right;
    white-space: nowrap;
}

/* recorder */
.recorder {
    position: absolute;
    left: 338px;
    top: 639px;
    width: 494px;
    height: 78px;
    border: 1px solid #3a4350;
    border-width: 0 2px 0 3px;
    border-radius: 5px 5px 0 0;
    background-color: #f2f3f5;
    overflow: hidden;
    font-family: "DejaVu Sans Condensed", "DejaVu Sans", sans-serif;
    font-size: 8.5px;
    color: #222;
}
.rec-title {
    height: 21px;
    background: linear-gradient(#6d7581, #464f5e 45%, #20242f 55%, #343a49);
    display: flex;
    align-items: center;
    padding-left: 7px;
    color: #b4bac2;
    font-family: "Open Sans", "Noto Sans", sans-serif;
    font-size: 11.3px;
}
.rec-title span {
    margin-left: 4px;
}
.close {
    width: 29px;
    height: 11px;
    margin: 0 6px 7px auto;
    border: 1px solid #76808f;
    display: flex;
    align-items: center;
    justify-content: center;
}
.rec-row {
    display: flex;
    align-items: center;
    height: 33px;
    margin: 0 10px 0 8px;
    border-bottom: 1px solid #ccc;
    gap: 3px;
}
.rbtn {
    width: 58px;
    height: 20px;
    border: 1px solid #999;
    border-radius: 2px;
    background: linear-gradient(#f5f5f5, #ddd);
    display: flex;
    align-items: center;
    justify-content: center;
    gap: 4px;
    font-size: 8.7px;
    color: #111;
}
.elapsed {
    margin-left: 8px;
}
.rbtn.draw {
    width: 87px;
    margin-left: auto;
    font-size: 8.9px;
}
.tools {
    align-items: flex-start;
    padding-top: 8px;
    border: 0;
    margin-right: 8px;
}
.rbtn.off {
    color: #aaa;
    border-color: #ccc;
    background: #f0f0f0;
}
.rbtn.rect { width: 63px; }
.tools i {
    width: 0;
    border: 3px solid transparent;
    border-top: 3px solid #999;
    border-bottom: 0;
    margin-left: 4px;
}
.combo {
    width: 76px;
    height: 20px;
    border: 1px solid #ccc;
    display: flex;
    align-items: center;
    justify-content: space-between;
    padding: 0 3px;
    color: #aaa;
}
.combo.second {
    width: 83px;
}
.combo span {
    width: 64px;
    height: 14px;
    border: 1px solid #ccc;
}
.rbtn.clear {
    margin-left: 2px;
}
```
